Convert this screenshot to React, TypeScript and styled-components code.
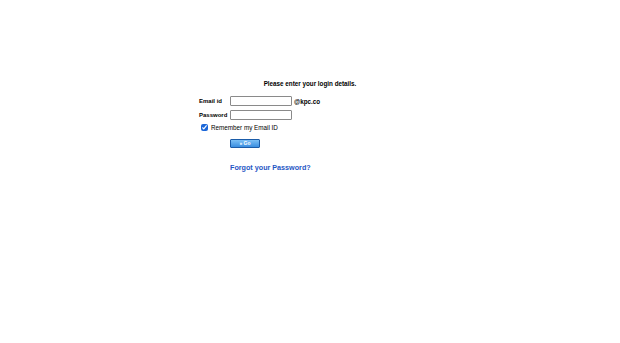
import styled, { createGlobalStyle } from "styled-components"

const Global = createGlobalStyle`
  html, body {
    margin:0;
    padding:0;
    background:#fff;
  }
  body{
    font-family:"Liberation Sans", Arial, sans-serif;
    color:#000;
  }
`

const Page = styled.div`
  width:620px;
  height:343px;
  padding-top:80px;
  box-sizing:border-box;
`

const Heading = styled.p`
  margin:0 0 8px 0;
  text-align:center;
  font-size:6.3px;
  font-weight:700;
  line-height:8px;
`

const Form = styled.form`
  margin-left:199px;
  display:grid;
  grid-template-columns:31px auto;
  row-gap:4px;
  align-items:center;
  font-size:6px;
  font-weight:700;
`

const Label = styled.label`
  line-height:10px;
`

const FieldRow = styled.div`
  display:flex;
  align-items:center;
  gap:2px;
`

const Input = styled.input`
  width:62px;
  height:10px;
  box-sizing:border-box;
  border:1px solid #8a8a8a;
  border-radius:1px;
  padding:0;
  margin:0;
  font-size:6px;
`

const Domain = styled.span`
  font-size:6.3px;
  font-weight:700;
`

const CheckRow = styled.div`
  grid-column:1 / span 2;
  display:flex;
  align-items:center;
  gap:3px;
  padding-left:2px;
  font-size:6.3px;
  font-weight:400;
`

const Check = styled.input`
  width:7px;
  height:7px;
  margin:0;
  accent-color:#1a66d8;
`

const GoButton = styled.button`
  grid-column:2;
  margin-top:4px;
  width:30px;
  height:9px;
  padding:0;
  border:1px solid #1b5ca8;
  border-radius:1px;
  background:linear-gradient(#7cc0f5, #3a8ee0);
  color:#fff;
  font-family:"Liberation Sans", Arial, sans-serif;
  font-size:5px;
  font-weight:700;
  line-height:7px;
`

const Forgot = styled.a`
  grid-column:2;
  margin-top:11px;
  color:#1f56c4;
  font-size:7.2px;
  font-weight:700;
  text-decoration:none;
`

const App = () => {
  return(
    <Page>
      <Global />
      <Heading>Please enter your login details.</Heading>
      <Form onSubmit={e => e.preventDefault()}>
        <Label>Email id</Label>
        <FieldRow>
          <Input type="text" />
          <Domain>@kpc.co</Domain>
        </FieldRow>
        <Label>Password</Label>
        <FieldRow>
          <Input type="password" />
        </FieldRow>
        <CheckRow>
          <Check type="checkbox" defaultChecked />
          <span>Remember my Email ID</span>
        </CheckRow>
        <GoButton type="submit">» Go</GoButton>
        <Forgot href="#">Forgot your Password?</Forgot>
      </Form>
    </Page>
  )
}

export default App
